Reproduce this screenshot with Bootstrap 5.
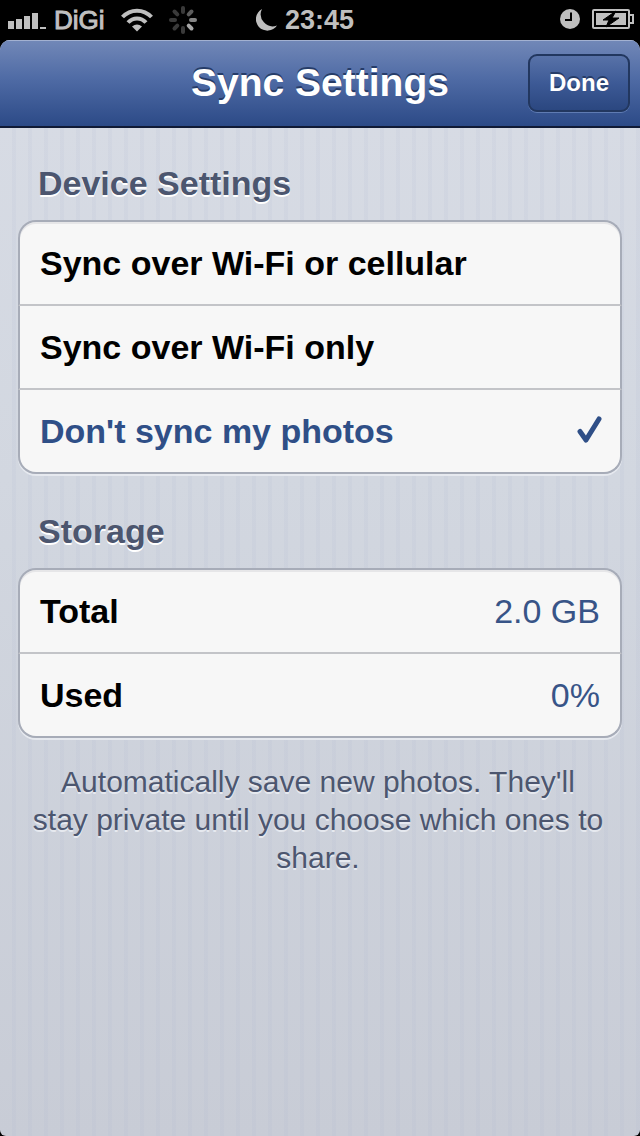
<!DOCTYPE html>
<html lang="en">
<head>
<meta charset="utf-8">
<meta name="viewport" content="width=device-width, initial-scale=1">
<title>Sync Settings</title>
<link href="https://cdn.jsdelivr.net/npm/bootstrap@5.3.0/dist/css/bootstrap.min.css" rel="stylesheet">
<style>
  body {
    background: #000;
    font-family: "Liberation Sans", Arial, sans-serif;
    font-size: 34px;
    line-height: 40px;
  }
  .status-bar {
    display: grid;
    grid-template-columns: 1fr auto 1fr;
    height: 40px;
    padding: 0 6px 0 8px;
    color: #bfbfbf;
    font-size: 27px;
    font-weight: 700;
  }
  .carrier { font-size: 26px; font-weight: 400; -webkit-text-stroke: 1px #bfbfbf; }
  .clock { padding-right: 32px; }
  .screen {
    border-radius: 10px 10px 6px 6px;
    background:
      repeating-linear-gradient(90deg, rgba(165, 175, 205, 0) 0 12px, rgba(165, 175, 205, .1) 12px 16px),
      linear-gradient(#d8dce5, #d2d7e0 40%, #c8ccd6);
  }
  .title-bar {
    height: 88px;
    padding: 0 10px;
    border-bottom: 2px solid #101a35;
    background: linear-gradient(#7288b8, #4f6ba5 45%, #2c4a87);
    box-shadow: inset 0 1px 0 #a3b1d1;
    display: grid;
    grid-template-columns: 1fr auto 1fr;
  }
  .title-bar h1 {
    grid-column: 2;
    font-size: 39px;
    font-weight: 700;
    color: #fff;
    text-shadow: 0 -2px 0 #263c68;
  }
  .btn-done {
    --bs-btn-color: #fff;
    --bs-btn-hover-color: #fff;
    --bs-btn-active-color: #fff;
    width: 102px;
    height: 58px;
    padding: 0;
    font-size: 24px;
    font-weight: 700;
    border: 2px solid #22375f;
    border-radius: 9px;
    background: linear-gradient(#5872a8, #3d5a96 50%, #2b4780);
    text-shadow: 0 -2px 0 #263c68;
    box-shadow: 0 1px 0 #5f7bb2;
  }
  .settings { padding: 0 18px; }
  .settings section { padding-top: 35px; }
  .section-title {
    padding: 0 20px;
    margin: 0 0 17px;
    font-size: 34px;
    font-weight: 700;
    line-height: 40px;
    color: #4c566f;
    text-shadow: 0 2px 0 #fff;
  }
  .panel {
    --bs-list-group-bg: #f7f7f7;
    --bs-list-group-color: #000;
    --bs-list-group-border-color: #a7acb8;
    --bs-list-group-border-width: 2px;
    --bs-list-group-border-radius: 18px;
    --bs-list-group-item-padding-x: 20px;
    --bs-list-group-item-padding-y: 0;
    margin-bottom: 2px;
    box-shadow: 0 2px 0 #e6e9ef;
  }
  .panel .list-group-item { height: 84px; font-weight: 700; }
  .panel .list-group-item:first-child { height: 86px; box-shadow: inset 0 2px 0 #e6e6e8; }
  .panel .list-group-item + .list-group-item { border-top: 0; }
  .panel .list-group-item:not(:last-child) { border-bottom-color: #c3c4c8; }
  .panel .tick { visibility: hidden; margin-right: -3px; }
  .panel input:checked ~ .tick { visibility: visible; }
  .panel input:checked ~ label { color: #2f4f87; }
  .panel dd { font-weight: 400; color: #385487; }
  .hint {
    padding-right: 4px;
    margin-top: 25px;
    font-size: 30px;
    line-height: 38px;
    color: #4c566f;
    text-shadow: 0 2px 0 #e6e9ef;
  }
</style>
</head>
<body class="d-flex flex-column min-vh-100">
  <header class="status-bar align-items-center">
    <div class="d-flex align-items-center">
      <svg width="38" height="17" viewBox="0 0 38 17" fill="#bfbfbf" aria-label="Signal">
        <path d="M0 9h6v8H0zM8 7h6v10H8zM16 4h6v13h-6zM24 1h6v16h-6zM32 15h6v2h-6z"/>
      </svg>
      <span class="carrier ms-2">DiGi</span>
      <svg class="ms-3" width="32" height="24" viewBox="0 0 32 24" aria-label="Wi-Fi">
        <g fill="none" stroke="#bfbfbf" stroke-width="4">
          <path d="M1.500 9C9.500 .5 22.500 .5 30.500 9"/>
          <path d="M7 14.500C12 9 20 9 25 14.500"/>
        </g>
        <path d="M11 18.500Q16 14.500 21 18.500L16 23.500z" fill="#bfbfbf"/>
      </svg>
      <svg class="ms-3" width="28" height="28" viewBox="-14 -14 28 28" stroke-width="4" stroke-linecap="round" aria-label="Loading">
        <path d="M0-12V-8" stroke="#3a3a3a"/>
        <path d="M8.500-8.500L5.700-5.700" stroke="#5c5c5c"/>
        <path d="M12 0H8" stroke="#858585"/>
        <path d="M8.500 8.500L5.700 5.700" stroke="#a8a8a8"/>
        <path d="M0 12V8" stroke="#3a3a3a"/>
        <path d="M-8.500 8.500L-5.700 5.700" stroke="#3a3a3a"/>
        <path d="M-12 0H-8" stroke="#3a3a3a"/>
        <path d="M-8.500-8.500L-5.700-5.700" stroke="#3a3a3a"/>
      </svg>
    </div>
    <div class="clock d-flex align-items-center gap-2">
      <svg width="21" height="22" viewBox="0 0 21 22" aria-label="Do not disturb">
        <path d="M6 0A11.500 11.500 0 1 0 21 16.500A12 12 0 0 1 6 0z" fill="#bfbfbf"/>
      </svg>
      <time>23:45</time>
    </div>
    <div class="d-flex align-items-center justify-content-end">
      <svg width="20" height="22" viewBox="0 1 20 22" aria-label="Alarm">
        <circle cx="10" cy="11" r="10" fill="#bfbfbf"/>
        <path d="M11 4.500V12H5" fill="none" stroke="#000" stroke-width="2"/>
      </svg>
      <svg class="ms-2" width="46" height="22" viewBox="-4 0 46 22" aria-label="Charging">
        <rect x="1" y="1" width="36" height="18" rx="1" fill="none" stroke="#bfbfbf" stroke-width="2"/>
        <path d="M38 6h3v8h-3" fill="none" stroke="#bfbfbf" stroke-width="2"/>
        <path d="M4 4h30v12H4z" fill="#bfbfbf"/>
        <path d="M24 2L11 11h6l-3 7L27 9h-7z" fill="#000" stroke="#000" stroke-width="1"/>
      </svg>
    </div>
  </header>

  <div class="screen flex-grow-1 overflow-hidden">
    <nav class="title-bar align-items-center">
      <h1 class="m-0 text-nowrap">Sync Settings</h1>
      <button type="button" class="btn btn-done ms-auto">Done</button>
    </nav>

    <main class="settings">
      <section>
        <h2 class="section-title">Device Settings</h2>
        <div class="list-group panel" role="radiogroup" aria-label="Device Settings">
          <div class="list-group-item d-flex align-items-center">
            <input class="visually-hidden" type="radio" name="sync" id="syncAll">
            <label class="flex-grow-1" for="syncAll">Sync over Wi-Fi or cellular</label>
            <svg class="tick" width="26" height="30" viewBox="0 0 26 30" aria-hidden="true"><path d="M3 15.500L9 24L22 3" fill="none" stroke="#2f4f87" stroke-width="5" stroke-linecap="round" stroke-linejoin="round"/></svg>
          </div>
          <div class="list-group-item d-flex align-items-center">
            <input class="visually-hidden" type="radio" name="sync" id="syncWifi">
            <label class="flex-grow-1" for="syncWifi">Sync over Wi-Fi only</label>
            <svg class="tick" width="26" height="30" viewBox="0 0 26 30" aria-hidden="true"><path d="M3 15.500L9 24L22 3" fill="none" stroke="#2f4f87" stroke-width="5" stroke-linecap="round" stroke-linejoin="round"/></svg>
          </div>
          <div class="list-group-item d-flex align-items-center">
            <input class="visually-hidden" type="radio" name="sync" id="syncNone" checked>
            <label class="flex-grow-1" for="syncNone">Don't sync my photos</label>
            <svg class="tick" width="26" height="30" viewBox="0 0 26 30" aria-hidden="true"><path d="M3 15.500L9 24L22 3" fill="none" stroke="#2f4f87" stroke-width="5" stroke-linecap="round" stroke-linejoin="round"/></svg>
          </div>
        </div>
      </section>

      <section>
        <h2 class="section-title">Storage</h2>
        <dl class="list-group panel">
          <div class="list-group-item d-flex align-items-center justify-content-between">
            <dt>Total</dt><dd class="m-0">2.0 GB</dd>
          </div>
          <div class="list-group-item d-flex align-items-center justify-content-between">
            <dt>Used</dt><dd class="m-0">0%</dd>
          </div>
        </dl>
        <p class="hint text-center">Automatically save new photos. They'll stay&nbsp;private until you choose which ones to share.</p>
      </section>
    </main>
  </div>
  <script src="https://cdn.jsdelivr.net/npm/bootstrap@5.3.0/dist/js/bootstrap.bundle.min.js"></script>
</body>
</html>
